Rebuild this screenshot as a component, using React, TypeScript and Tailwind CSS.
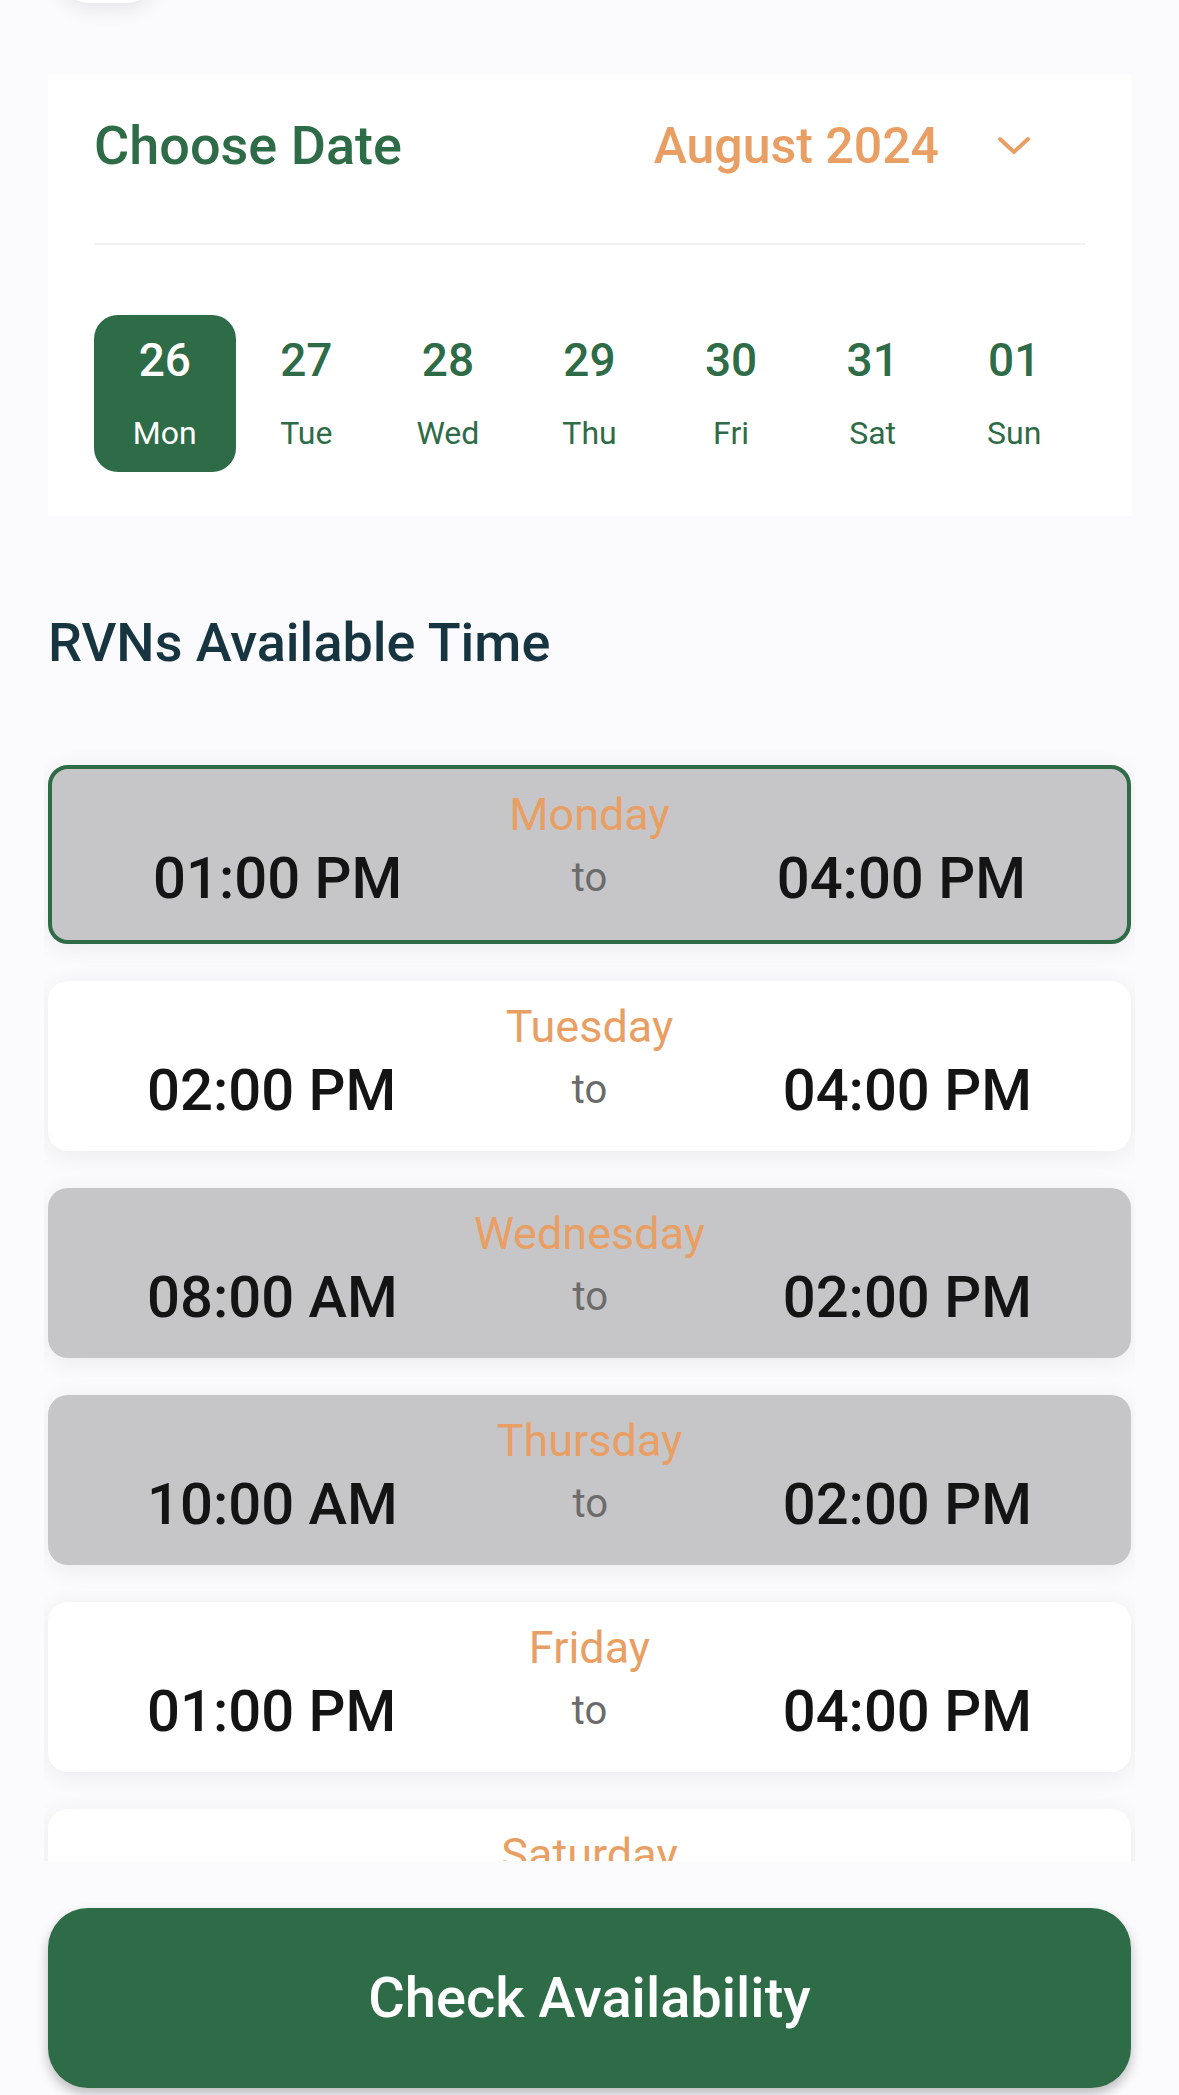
import React from "react";

const dates = [
  { n: "26", d: "Mon", active: true },
  { n: "27", d: "Tue" },
  { n: "28", d: "Wed" },
  { n: "29", d: "Thu" },
  { n: "30", d: "Fri" },
  { n: "31", d: "Sat" },
  { n: "01", d: "Sun" },
];

const slots = [
  { day: "Monday", from: "01:00 PM", to: "04:00 PM", kind: "selected" },
  { day: "Tuesday", from: "02:00 PM", to: "04:00 PM", kind: "white" },
  { day: "Wednesday", from: "08:00 AM", to: "02:00 PM", kind: "gray" },
  { day: "Thursday", from: "10:00 AM", to: "02:00 PM", kind: "gray" },
  { day: "Friday", from: "01:00 PM", to: "04:00 PM", kind: "white" },
  { day: "Saturday", from: "10:00 AM", to: "01:00 PM", kind: "white" },
];

function SlotCard({ s }: { s: (typeof slots)[number] }) {
  const base =
    s.kind === "selected"
      ? "bg-[#c6c5c8] border-[4px] border-[#2e6b47] pt-[20px] pb-[29px] px-[101px]"
      : s.kind === "gray"
      ? "bg-[#c6c5c8] pt-[20px] pb-[28px] px-[99px]"
      : "bg-white pt-[20px] pb-[28px] px-[99px]";
  return (
    <div
      className={`shrink-0 flex flex-col rounded-[20px] shadow-[0_4px_24px_rgba(0,0,0,0.07)] ${base}`}
    >
      <div className="text-center text-[45px] leading-[52px] text-[#e99f63]">
        {s.day}
      </div>
      <div className="mt-[4px] flex items-center justify-between">
        <span className="text-[58px] leading-[66px] font-medium text-[#141414]">
          {s.from}
        </span>
        <span className="text-[40px] leading-[48px] text-[#6b6b6b]">to</span>
        <span className="text-[58px] leading-[66px] font-medium text-[#141414]">
          {s.to}
        </span>
      </div>
    </div>
  );
}

export default function App() {
  return (
    <div className="min-h-[2095px] overflow-hidden bg-[#fbfafc] px-[48px] font-['Roboto',sans-serif] flex flex-col">
      {/* back button peeking at top */}
      <div className="ml-[12px] -mt-[92px] h-[95px] w-[95px] rounded-[28px] bg-white shadow-[0_6px_20px_rgba(0,0,0,0.09)]" />

      {/* Date card */}
      <div className="mt-[72px] bg-white px-[46px] pt-[41px] pb-[44px]">
        <div className="flex h-[60px] items-center justify-between">
          <span className="text-[54px] leading-[60px] font-medium text-[#2e6b47]">
            Choose Date
          </span>
          <div className="mr-[54px] flex items-center">
            <span className="text-[50px] leading-[60px] font-medium text-[#e99f63]">
              August 2024
            </span>
            <svg
              className="ml-[58px]"
              width="34"
              height="20"
              viewBox="0 0 34 20"
              fill="none"
            >
              <polyline
                points="3,3 17,16 31,3"
                stroke="#e99f63"
                strokeWidth="4"
                strokeLinecap="round"
                strokeLinejoin="round"
              />
            </svg>
          </div>
        </div>
        <div className="mt-[67px] h-[2px] bg-[#f1f0f3]" />
        <div className="mt-[70px] grid grid-cols-7">
          {dates.map((d) => (
            <div
              key={d.n}
              className={`flex h-[157px] flex-col items-center rounded-[24px] pt-[18px] ${
                d.active ? "bg-[#2e6b47] text-white" : "text-[#2e6b47]"
              }`}
            >
              <span className="text-[46px] leading-[54px] font-medium">{d.n}</span>
              <span className="mt-[26px] text-[32px] leading-[40px]">{d.d}</span>
            </div>
          ))}
        </div>
      </div>

      {/* Heading */}
      <h2 className="mt-[95px] text-[54px] leading-[64px] font-medium text-[#163540]">
        RVNs Available Time
      </h2>

      {/* Slots list */}
      <div className="-mx-[4px] mt-[57px] flex h-[1129px] flex-col gap-[37px] overflow-hidden px-[4px] pt-[33px]">
        {slots.map((s) => (
          <SlotCard key={s.day} s={s} />
        ))}
      </div>

      {/* Button */}
      <button className="mt-[47px] flex h-[180px] w-full items-center justify-center rounded-[40px] bg-[#2e6b47] text-[56px] font-medium text-white shadow-[0_6px_12px_rgba(0,0,0,0.25)]">
        Check Availability
      </button>
    </div>
  );
}
